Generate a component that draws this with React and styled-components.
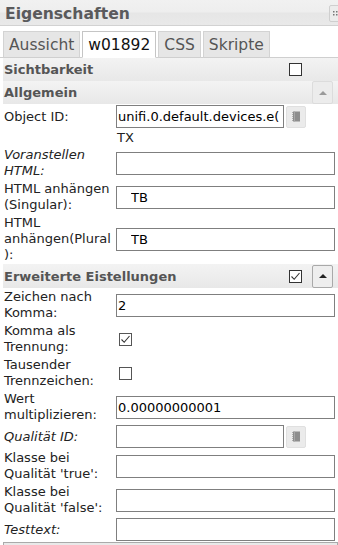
import React from 'react';
import styled, { createGlobalStyle } from 'styled-components';

const GlobalStyle = createGlobalStyle`
  html, body {
    margin: 0;
    padding: 0;
    background: #fff;
  }
  body {
    font-family: "DejaVu Sans", Verdana, sans-serif;
    overflow: hidden;
  }
`;

const Page = styled.div`
  width: 338px;
  height: 545px;
  overflow: hidden;
  background: #fff;
`;

/* ---------- title bar ---------- */
const TitleBar = styled.div`
  height: 26px;
  box-sizing: border-box;
  display: flex;
  align-items: center;
  padding: 2px 0 0 5px;
  background: linear-gradient(#f1f1f1 0%, #eeeeee 48%, #e6e6e6 52%, #e9e9e9 100%);
  border-bottom: 1px solid #d2d2d2;
`;

const Title = styled.div`
  flex: 1;
  font: bold 15.6px "DejaVu Sans", Verdana, sans-serif;
  color: #5a5a5c;
`;

const Grip = styled.div`
  align-self: flex-start;
  margin-top: 3px;
  margin-right: -6px;
  width: 15px;
  height: 17px;
  box-sizing: border-box;
  border: 1px solid #cfcfcf;
  border-radius: 2px;
  background: #ececec;
  display: flex;
  align-items: center;
  padding-left: 3px;
`;

/* ---------- tabs ---------- */
const TabBar = styled.div`
  display: flex;
  gap: 2px;
  padding: 5px 0 0 3px;
  border-bottom: 1px solid #cfcfcf;
`;

const Tab = styled.div`
  height: 27px;
  margin-bottom: -1px;
  box-sizing: border-box;
  padding: 0 5px;
  display: flex;
  align-items: center;
  font: 15.5px "DejaVu Sans", Verdana, sans-serif;
  border: 1px solid ${(p) => (p.$active ? '#c5c5c5' : '#d3d3d3')};
  border-bottom-color: ${(p) => (p.$active ? '#fff' : '#cfcfcf')};
  background: ${(p) => (p.$active ? '#fff' : '#e6e6e6')};
  color: ${(p) => (p.$active ? '#111' : '#555')};
`;

/* ---------- panel ---------- */
const Panel = styled.div`
  margin-left: 3px;
`;

const SectionHeader = styled.div`
  display: flex;
  align-items: center;
  height: ${(p) => p.$h || 23}px;
  padding-left: 1px;
  background: linear-gradient(#f3f3f3, #e8e8e8);
`;

const SectionTitle = styled.div`
  flex: 1;
  font-weight: bold;
  font-size: 13px;
  color: #555;
`;

const Tools = styled.div`
  display: flex;
  align-items: center;
  gap: 10px;
  margin-right: 5px;
`;

const Slot = styled.div`
  width: 21px;
  height: 22px;
`;

const Toggle = styled.div`
  width: 21px;
  height: 23px;
  box-sizing: border-box;
  border: 1px solid ${(p) => (p.$dim ? '#dcdcdc' : '#a9a9a9')};
  border-radius: 2px;
  background: ${(p) => (p.$dim ? '#ececec' : '#eeeeee')};
  display: flex;
  align-items: center;
  justify-content: center;
`;

const Arrow = styled.span`
  width: 0;
  height: 0;
  border-left: 4px solid transparent;
  border-right: 4px solid transparent;
  border-bottom: 4px solid ${(p) => (p.$dim ? '#9a9a9a' : '#222')};
`;

const Box = styled.span`
  width: 13px;
  height: 13px;
  box-sizing: border-box;
  border: 1px solid ${(p) => p.$border || '#333'};
  background: #fff;
  display: inline-flex;
  align-items: center;
  justify-content: center;
  margin-left: ${(p) => p.$ml || 0}px;
`;

const Row = styled.div`
  display: grid;
  grid-template-columns: 113px 1fr;
  align-items: center;
  padding: ${(p) => (p.$compact ? '0' : '1px 0')};
  min-height: ${(p) => (p.$compact ? 17 : 23)}px;
`;

const Label = styled.div`
  padding: 0 3px 0 1px;
  font-size: 13px;
  line-height: 16px;
  color: #222;
  overflow-wrap: anywhere;
  font-style: ${(p) => (p.$italic ? 'italic' : 'normal')};
`;

const Cell = styled.div`
  display: flex;
  align-items: center;
  gap: 2px;
`;

const Plain = styled.div`
  padding-left: 1px;
  font-size: 13px;
  line-height: 17px;
  color: #222;
`;

const Field = styled.input`
  box-sizing: border-box;
  height: 23px;
  width: ${(p) => (p.$narrow ? 168 : 219)}px;
  margin: 0;
  border: 1px solid #7f7f7f;
  border-radius: 0;
  padding: 0 1px 0 ${(p) => p.$indent || 1}px;
  font: 13px "DejaVu Sans", Verdana, sans-serif;
  color: #000;
  background: #fff;
  outline: none;
`;

const Picker = styled.div`
  width: 20px;
  height: 22px;
  box-sizing: border-box;
  border: 1px solid #e0e0e0;
  border-radius: 2px;
  background: #ebebeb;
  display: flex;
  align-items: center;
  justify-content: center;
`;

const NextSection = styled.div`
  height: 20px;
  border: 1px solid #aaa;
  background: #e9e9e9;
`;

const Tick = () => (
  <svg width="11" height="11" viewBox="0 0 11 11">
    <path d="M1.5 5.5 L4.2 8.3 L9.5 2" fill="none" stroke="#333" strokeWidth="1.1" />
  </svg>
);

const Book = () => (
  <svg width="8" height="11" viewBox="0 0 8 11">
    <rect x="1" y="0.5" width="7" height="10" fill="#8e8e8e" />
    <rect x="0" y="1" width="1" height="1" fill="#b0b0b0" />
    <rect x="0" y="3" width="1" height="1" fill="#b0b0b0" />
    <rect x="0" y="5" width="1" height="1" fill="#b0b0b0" />
    <rect x="0" y="7" width="1" height="1" fill="#b0b0b0" />
    <rect x="0" y="9" width="1" height="1" fill="#b0b0b0" />
    <rect x="2" y="0.5" width="1" height="10" fill="#a8a8a8" />
  </svg>
);

const Dots = () => (
  <svg width="8" height="5" viewBox="0 0 8 5">
    {[0, 3, 6].map((x) => (
      <React.Fragment key={x}>
        <rect x={x} y="0" width="1.5" height="1.5" fill="#777" />
        <rect x={x} y="3" width="1.5" height="1.5" fill="#777" />
      </React.Fragment>
    ))}
  </svg>
);

const tabs = ['Aussicht', 'w01892', 'CSS', 'Skripte'];

export default function App() {
  return (
    <Page>
      <GlobalStyle />
      <TitleBar>
        <Title>Eigenschaften</Title>
        <Grip>
          <Dots />
        </Grip>
      </TitleBar>

      <TabBar>
        {tabs.map((t) => (
          <Tab key={t} $active={t === 'w01892'}>
            {t}
          </Tab>
        ))}
      </TabBar>

      <Panel>
        <SectionHeader>
          <SectionTitle>Sichtbarkeit</SectionTitle>
          <Tools>
            <Box />
            <Slot />
          </Tools>
        </SectionHeader>

        <SectionHeader>
          <SectionTitle>Allgemein</SectionTitle>
          <Tools>
            <Toggle $dim>
              <Arrow $dim />
            </Toggle>
          </Tools>
        </SectionHeader>

        <Row>
          <Label>Object ID:</Label>
          <Cell>
            <Field $narrow defaultValue="unifi.0.default.devices.e(" />
            <Picker>
              <Book />
            </Picker>
          </Cell>
        </Row>
        <Row $compact>
          <div />
          <Plain>TX</Plain>
        </Row>
        <Row>
          <Label $italic>Voranstellen HTML:</Label>
          <Cell>
            <Field />
          </Cell>
        </Row>
        <Row>
          <Label>HTML anhängen (Singular):</Label>
          <Cell>
            <Field $indent={14} defaultValue="TB" />
          </Cell>
        </Row>
        <Row>
          <Label>HTML anhängen(Plural):</Label>
          <Cell>
            <Field $indent={14} defaultValue="TB" />
          </Cell>
        </Row>

        <SectionHeader $h={24}>
          <SectionTitle>Erweiterte Eistellungen</SectionTitle>
          <Tools>
            <Box>
              <Tick />
            </Box>
            <Toggle>
              <Arrow />
            </Toggle>
          </Tools>
        </SectionHeader>

        <Row>
          <Label>Zeichen nach Komma:</Label>
          <Cell>
            <Field defaultValue="2" />
          </Cell>
        </Row>
        <Row>
          <Label>Komma als Trennung:</Label>
          <Cell>
            <Box $ml={3} $border="#555">
              <Tick />
            </Box>
          </Cell>
        </Row>
        <Row>
          <Label>Tausender Trennzeichen:</Label>
          <Cell>
            <Box $ml={3} $border="#555" />
          </Cell>
        </Row>
        <Row>
          <Label>Wert multiplizieren:</Label>
          <Cell>
            <Field defaultValue="0.00000000001" />
          </Cell>
        </Row>
        <Row>
          <Label $italic>Qualität ID:</Label>
          <Cell>
            <Field $narrow />
            <Picker>
              <Book />
            </Picker>
          </Cell>
        </Row>
        <Row>
          <Label>Klasse bei Qualität 'true':</Label>
          <Cell>
            <Field />
          </Cell>
        </Row>
        <Row>
          <Label>Klasse bei Qualität 'false':</Label>
          <Cell>
            <Field />
          </Cell>
        </Row>
        <Row>
          <Label $italic>Testtext:</Label>
          <Cell>
            <Field />
          </Cell>
        </Row>

        <NextSection />
      </Panel>
    </Page>
  );
}
